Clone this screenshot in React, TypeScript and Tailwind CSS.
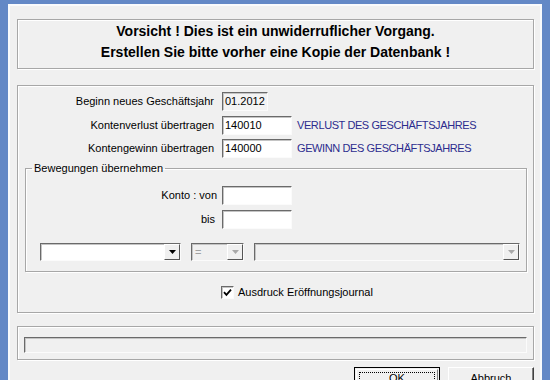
import React from 'react';

const font = { fontFamily: '"Liberation Sans", Arial, sans-serif' };

const sunken =
    'border border-t-[#6a6a6a] border-l-[#6a6a6a] border-r-[#fbfbfb] border-b-[#fbfbfb] shadow-[inset_1px_1px_0_#c4c4c4]';
const panel = 'shrink-0 border border-[#a7a7a7] shadow-[inset_1px_1px_0_#ffffff,1px_1px_0_#ffffff]';

const Field: React.FC<{ value?: string; width: string; readOnly?: boolean }> = ({ value, width, readOnly }) => (
    <div className={`${width} h-[19px] shrink-0 ${sunken} ${readOnly ? 'bg-[#f3f3f3]' : 'bg-white'} flex items-center pl-[2px] text-[11px] text-black`}>
        {value}
    </div>
);

const Arrow: React.FC<{ disabled?: boolean }> = ({ disabled }) => (
    <div className="w-[16px] h-full bg-[#f0f0f0] border border-t-white border-l-white border-r-[#555] border-b-[#555] flex items-center justify-center">
        <svg width="7" height="4" viewBox="0 0 7 4">
            <path d="M0 0 H7 L3.5 4 Z" fill={disabled ? '#a8a8a8' : '#000'} />
        </svg>
    </div>
);

const Combo: React.FC<{ width: string; disabled?: boolean; text?: string }> = ({ width, disabled, text }) => (
    <div className={`${width} h-[18px] ${sunken} ${disabled ? 'bg-[#f0f0f0]' : 'bg-white'} flex items-stretch`}>
        <div className="flex-1 flex items-center pl-[3px] text-[11px] text-[#a0a0a0]">{text}</div>
        <Arrow disabled={disabled} />
    </div>
);

const Row: React.FC<{ label: string; children: React.ReactNode; labelW: string; gap: string }> = ({ label, children, labelW, gap }) => (
    <div className="flex items-center">
        <div className={`${labelW} ${gap} shrink-0 text-right text-[11px] text-black`}>{label}</div>
        {children}
    </div>
);

export default function App() {
    return (
        <div style={font} className="w-[550px] h-[380px] overflow-hidden bg-[#6388c6] pl-[8px] pr-[8px] pt-[4px]">
            <div className="h-full bg-[#f0f0f0] border-l-2 border-t-2 border-r-2 border-[#f9fafc] pl-[7px] pr-[6px] pt-[13px] flex flex-col">
                {/* warning */}
                <div className={`h-[50px] ${panel} flex flex-col items-center pt-[1px] text-[14px] font-bold leading-[21px] text-black`}>
                    <div>Vorsicht ! Dies ist ein unwiderruflicher Vorgang.</div>
                    <div>Erstellen Sie bitte vorher eine Kopie der Datenbank !</div>
                </div>

                {/* main */}
                <div className={`mt-[16px] h-[228px] ${panel} flex flex-col pt-[6px]`}>
                    <Row label="Beginn neues Geschäftsjahr" labelW="w-[196px]" gap="mr-[8px]">
                        <Field value="01.2012" width="w-[46px]" readOnly />
                    </Row>
                    <div className="mt-[5px]">
                        <Row label="Kontenverlust übertragen" labelW="w-[196px]" gap="mr-[8px]">
                            <Field value="140010" width="w-[70px]" />
                            <span className="ml-[5px] text-[11px] tracking-[-0.4px] text-[#2c2c8e]">VERLUST DES GESCHÄFTSJAHRES</span>
                        </Row>
                    </div>
                    <div className="mt-[4px]">
                        <Row label="Kontengewinn übertragen" labelW="w-[196px]" gap="mr-[8px]">
                            <Field value="140000" width="w-[70px]" />
                            <span className="ml-[5px] text-[11px] tracking-[-0.4px] text-[#2c2c8e]">GEWINN DES GESCHÄFTSJAHRES</span>
                        </Row>
                    </div>

                    <fieldset className={`mt-[3px] ml-[7px] mr-[6px] h-[111px] ${panel} flex flex-col`}>
                        <legend className="ml-[6px] px-[2px] text-[11px] leading-[14px] text-black">Bewegungen übernehmen</legend>
                        <div className="mt-[11px]">
                            <Row label="Konto : von" labelW="w-[191px]" gap="mr-[5px]">
                                <Field width="w-[70px]" />
                            </Row>
                        </div>
                        <div className="mt-[5px]">
                            <Row label="bis" labelW="w-[189px]" gap="mr-[7px]">
                                <Field width="w-[70px]" />
                            </Row>
                        </div>
                        <div className="mt-[14px] ml-[14px] flex items-center">
                            <Combo width="w-[141px]" />
                            <div className="ml-[10px]">
                                <Combo width="w-[53px]" disabled text="=" />
                            </div>
                            <div className="ml-[10px]">
                                <Combo width="w-[266px]" disabled />
                            </div>
                        </div>
                    </fieldset>

                    <div className="mt-[12px] ml-[203px] flex items-center">
                        <div className={`w-[13px] h-[13px] ${sunken} bg-white flex items-center justify-center`}>
                            <svg width="9" height="9" viewBox="0 0 9 9">
                                <path d="M1 4.2 L3.4 6.8 L8 1.6" stroke="#000" strokeWidth="1.8" fill="none" />
                            </svg>
                        </div>
                        <span className="ml-[4px] text-[11px] text-black">Ausdruck Eröffnungsjournal</span>
                    </div>
                </div>

                {/* progress */}
                <div className={`mt-[13px] h-[34px] ${panel} pl-[6px] pr-[6px] pt-[10px]`}>
                    <div className={`h-[16px] ${sunken} bg-[#f0f0f0]`} />
                </div>

                {/* buttons */}
                <div className="mt-[7px] shrink-0 flex justify-end gap-[8px]">
                    <div className="w-[86px] h-[23px] border border-black bg-[#f0f0f0] p-[1px]">
                        <div className="h-full border border-t-white border-l-white border-r-[#808080] border-b-[#808080] p-[2px]">
                            <div className="h-full border border-dotted border-black flex items-center justify-center text-[11px] text-black">OK</div>
                        </div>
                    </div>
                    <div className="w-[86px] h-[23px] border border-t-white border-l-white border-r-[#404040] border-b-[#404040] bg-[#f0f0f0] flex items-center justify-center text-[11px] text-black shadow-[inset_-1px_-1px_0_#808080]">
                        Abbruch
                    </div>
                </div>
            </div>
        </div>
    );
}
